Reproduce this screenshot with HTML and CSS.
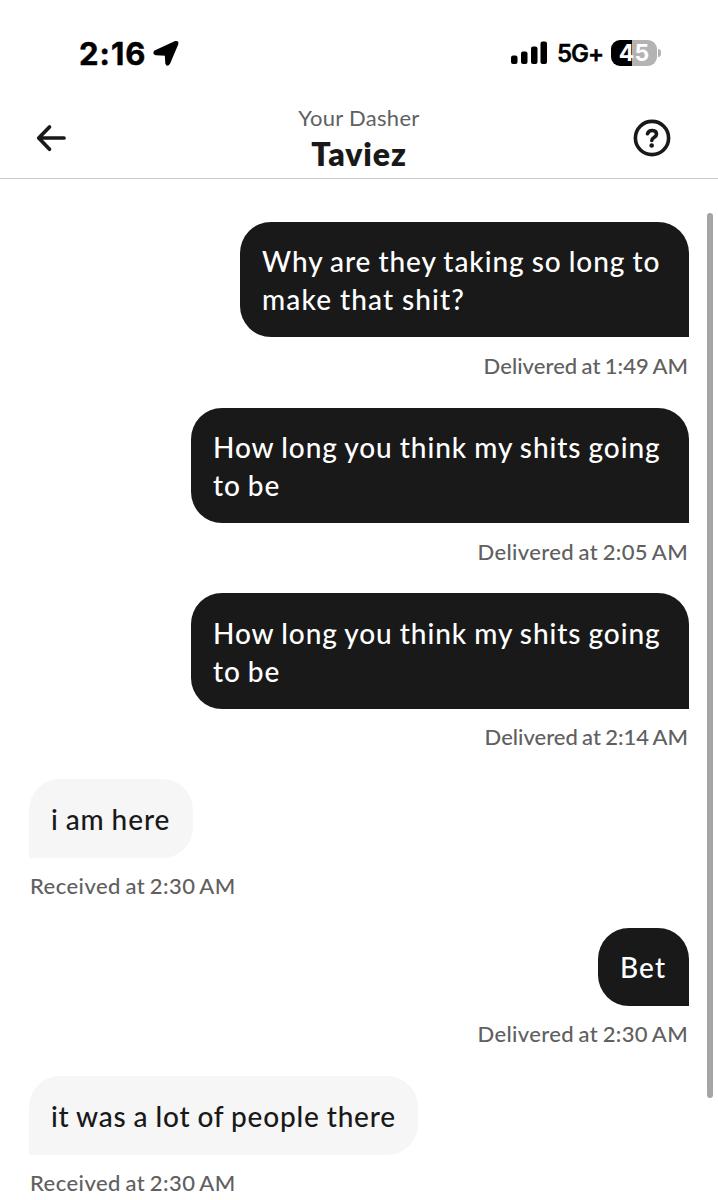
FILE: index.html
```html
<!DOCTYPE html>
<html lang="en">
<head>
<meta charset="utf-8">
<title>Your Dasher</title>
<link rel="stylesheet" href="styles.css">
</head>
<body>
<div class="screen">
  <div class="status">
    <div class="status-left">
      <span class="clock">2:16</span>
      <svg class="location" width="28" height="28" viewBox="0 0 28 28"><path d="M3 12.5 23.5 3Q26 2.4 25.3 5L17 24.5Q15.3 27 14.3 24.5L13.8 15.7 4 15.2Q1.3 14.3 3 12.5Z"/></svg>
    </div>
    <div class="status-right">
      <svg class="signal" width="36" height="24" viewBox="0 0 36 24"><rect x="0" y="14.5" width="6.5" height="8.5" rx="2"/><rect x="10" y="10.5" width="6.5" height="12.5" rx="2"/><rect x="20" y="5.5" width="6.5" height="17.5" rx="2"/><rect x="29.5" y="0.5" width="6.5" height="22.5" rx="2"/></svg>
      <span class="network">5G+</span>
      <span class="battery">45</span>
      <span class="battery-tip"></span>
    </div>
  </div>
  <header class="header">
    <svg class="back" width="32" height="28" viewBox="0 0 32 28"><path d="M13.5 3 2.7 14 13.5 25.2M3.5 14H28"/></svg>
    <div class="titles">
      <div class="subtitle">Your Dasher</div>
      <div class="name">Taviez</div>
    </div>
    <svg class="help" width="38" height="38" viewBox="0 0 38 38"><circle cx="19" cy="19" r="16.6"/><path d="M14.5 14.7C16 10.2 23.5 10.5 23.5 15.2 23.5 18.3 19 18 18.8 21.5"/><circle class="dot" cx="18.7" cy="26.5" r="2.3"/></svg>
  </header>
  <main class="chat">
    <div class="message sent"><div class="bubble b1"><span class="l1">Why are they taking so long to</span><span class="l2">make that shit?</span></div><div class="meta m1">Delivered at 1:49 AM</div></div>
    <div class="message sent"><div class="bubble b2"><span class="l3">How long you think my shits going</span><span class="l4">to be</span></div><div class="meta m2">Delivered at 2:05 AM</div></div>
    <div class="message sent"><div class="bubble b2"><span class="l3">How long you think my shits going</span><span class="l4">to be</span></div><div class="meta m3">Delivered at 2:14 AM</div></div>
    <div class="message received"><div class="bubble b3"><span class="l5">i am here</span></div><div class="meta m4">Received at 2:30 AM</div></div>
    <div class="message sent"><div class="bubble b4"><span class="l6">Bet</span></div><div class="meta m2">Delivered at 2:30 AM</div></div>
    <div class="message received"><div class="bubble b5"><span class="l7">it was a lot of people there</span></div><div class="meta m4">Received at 2:30 AM</div></div>
  </main>
  <div class="scrollbar"></div>
</div>
</body>
</html>
```
FILE: styles.css
```css
* { box-sizing: border-box; }
body { margin: 0; background: #fff; font-family: Lato, "Noto Sans", sans-serif; color: #191919; }
.screen { position: relative; width: 718px; height: 1200px; overflow: hidden; }
.status { height: 100px; padding: 35px 57px 0 79px; display: flex; justify-content: space-between; align-items: flex-start; font-family: Inter, sans-serif; color: #000; }
.status-left, .status-right { display: flex; align-items: center; height: 36px; }
.clock { width: 68px; font-size: 31px; font-weight: 700; letter-spacing: 1px; -webkit-text-stroke: 0.5px #000; }
.location { margin-left: 5px; stroke: #000; stroke-width: 2; stroke-linejoin: round; }
.signal { margin-right: 10px; }
.network { width: 46px; font-size: 24px; font-weight: 600; letter-spacing: -1px; -webkit-text-stroke: 0.4px #000; }
.battery { margin-left: 8px; width: 46px; height: 26px; border-radius: 9px; background: linear-gradient(to right, #000 45%, #b3b3b3 45%); color: #fff; font-size: 23px; line-height: 26px; font-weight: 700; text-align: center; }
.battery-tip { margin-left: 1px; width: 3px; height: 8px; background: #b3b3b3; border-radius: 0 4px 4px 0; }
.header { height: 79px; padding: 0 47px 0 36px; display: flex; justify-content: space-between; border-bottom: 1px solid #ccc; }
.back { margin-top: 24px; fill: none; stroke: #191919; stroke-width: 3.7; stroke-linecap: round; stroke-linejoin: round; }
.titles { width: 160px; margin-left: 17px; text-align: center; }
.subtitle { margin-top: 4px; font-size: 22px; line-height: 28px; letter-spacing: 0.3px; color: #606060; }
.name { margin-top: 4px; font-size: 32px; line-height: 36px; font-weight: 800; letter-spacing: 0.9px; }
.help { margin-top: 19px; fill: none; stroke: #191919; stroke-width: 3.6; stroke-linecap: round; }
.help .dot { fill: #191919; stroke: none; }
.chat { padding: 43px 29px 0; }
.message { display: flex; flex-direction: column; align-items: flex-start; }
.sent { align-items: flex-end; }
.bubble { min-height: 78.3px; padding: 21.4px 22px 18.5px; border-radius: 31px; font-size: 28px; line-height: 37.8px; font-weight: 500; white-space: nowrap; }
.bubble span { display: block; width: max-content; }
.sent .bubble { background: #191919; color: #fff; border-bottom-right-radius: 0; }
.received .bubble { background: #f6f6f6; border-bottom-left-radius: 0; }
.meta { height: 70.25px; padding: 14.3px 1px 0; font-size: 22px; line-height: 28px; font-weight: 500; color: #606060; white-space: nowrap; }
.b1 { width: 449px; }
.b2 { width: 498px; }
.b3 { width: 164px; }
.b4 { width: 91px; }
.b5 { width: 389px; }
.l1, .l3 { letter-spacing: 0.93px; word-spacing: -0.9px; }
.l2 { letter-spacing: 1.15px; word-spacing: -0.5px; }
.l4 { letter-spacing: 0.9px; word-spacing: -1px; }
.l5 { letter-spacing: 0.9px; word-spacing: -1px; }
.l6 { letter-spacing: 1.1px; }
.l7 { letter-spacing: 0.8px; word-spacing: -0.8px; }
.m1 { letter-spacing: 0.05px; word-spacing: -1.3px; }
.m2 { letter-spacing: 0.35px; word-spacing: -1.3px; }
.m3 { letter-spacing: 0px; word-spacing: -1.3px; }
.m4 { letter-spacing: 0.45px; word-spacing: -1.4px; }
.scrollbar { position: absolute; left: 707px; top: 213px; width: 6px; height: 885px; border-radius: 3px; background: #a5a5a5; }
```
